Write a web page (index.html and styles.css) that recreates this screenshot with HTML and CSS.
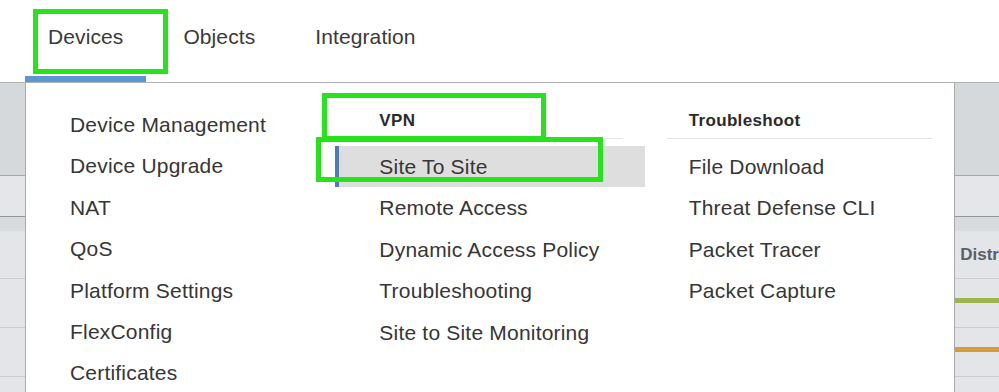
FILE: index.html
```html
<!DOCTYPE html>
<html lang="en">

<head>
    <meta charset="UTF-8">
    <meta name="viewport" content="width=device-width, initial-scale=1.0">
    <title>Devices menu</title>
    <link rel="stylesheet" href="styles.css">
</head>

<body>
    <header class="topnav">
        <nav class="tabs">
            <a class="tab active" href="#">Devices</a>
            <a class="tab" href="#">Objects</a>
            <a class="tab" href="#">Integration</a>
        </nav>

        <div class="dropdown">
            <ul class="menu-col">
                <li class="menu-item">Device Management</li>
                <li class="menu-item">Device Upgrade</li>
                <li class="menu-item">NAT</li>
                <li class="menu-item">QoS</li>
                <li class="menu-item">Platform Settings</li>
                <li class="menu-item">FlexConfig</li>
                <li class="menu-item">Certificates</li>
            </ul>
            <ul class="menu-col">
                <li class="menu-head">VPN</li>
                <li class="menu-item current">Site To Site</li>
                <li class="menu-item">Remote Access</li>
                <li class="menu-item">Dynamic Access Policy</li>
                <li class="menu-item">Troubleshooting</li>
                <li class="menu-item">Site to Site Monitoring</li>
            </ul>
            <ul class="menu-col">
                <li class="menu-head">Troubleshoot</li>
                <li class="menu-item">File Download</li>
                <li class="menu-item">Threat Defense CLI</li>
                <li class="menu-item">Packet Tracer</li>
                <li class="menu-item">Packet Capture</li>
            </ul>
        </div>
    </header>

    <main class="backdrop">
        <div class="band"></div>
        <div class="filter-row"></div>
        <div class="strip"></div>
        <div class="table-head">
            <span></span>
            <span class="col-title">s Distr</span>
        </div>
        <div class="table-row">
            <span></span>
            <span class="bar green"></span>
        </div>
        <div class="table-row">
            <span></span>
            <span class="bar orange"></span>
        </div>
        <div class="table-row"></div>
    </main>

    <!-- annotation boxes from the screenshot -->
    <div class="mark mark-devices"></div>
    <div class="mark mark-vpn"></div>
    <div class="mark mark-site"></div>
</body>

</html>
```

FILE: styles.css
```css
body {
    margin: 0;
    height: 392px;
    overflow: hidden;
    font-family: 'Liberation Sans', Arial, sans-serif;
    color: #363636;
    background-color: #fff;
}

.topnav {
    position: relative;
    height: 82px;
    border-bottom: 1px solid #b3b3b3;
    background-color: #fff;
    z-index: 2;
}

.tabs {
    display: flex;
    gap: 14px;
    height: 100%;
    padding-left: 25px;
}

.tab {
    box-sizing: border-box;
    height: 82px;
    padding: 24px 23px 0;
    font-size: 21px;
    line-height: 26px;
    letter-spacing: 0.1px;
    color: #3a3a3a;
    text-decoration: none;
    border-bottom: 6px solid transparent;
}

.tab.active {
    border-bottom-color: #5b97d1;
}

.dropdown {
    position: absolute;
    top: calc(100% + 1px);
    left: 25px;
    width: 928px;
    height: 320px;
    display: grid;
    grid-template-columns: repeat(3, 1fr);
    background-color: #fff;
    border-left: 1px solid #a9a9a9;
    border-right: 1px solid #a9a9a9;
}

.menu-col {
    list-style: none;
    margin: 0;
    padding: 21px 0 0;
}

.menu-head {
    margin: 0 22px 7px;
    padding-left: 22px;
    height: 34px;
    line-height: 34px;
    font-size: 17px;
    font-weight: bold;
    letter-spacing: 0.35px;
    color: #2b2b2b;
    border-bottom: 1px solid #e3e3e3;
}

.menu-item {
    height: 41.4px;
    line-height: 41.4px;
    padding-left: 44px;
    font-size: 21px;
    letter-spacing: 0.2px;
    white-space: nowrap;
}

.menu-item.current {
    padding-left: 40px;
    border-left: 4px solid #4e7db6;
    background-color: #dedede;
}

.backdrop {
    background-color: #e3e5e8;
}

.band {
    height: 92px;
    background-color: #d6d9dc;
    border-bottom: 1px solid #a3a6a9;
}

.filter-row {
    height: 40px;
    background-color: #e4e6e9;
    border-bottom: 1px solid #94979a;
}

.strip {
    height: 14px;
    background-color: #d8dbde;
}

.table-head,
.table-row {
    display: grid;
    grid-template-columns: 946px 1fr;
    border-bottom: 1px solid #c9cbce;
}

.table-head {
    height: 47px;
    align-items: center;
}

.table-row {
    height: 48px;
    align-items: start;
}

.col-title {
    font-size: 17px;
    font-weight: bold;
    color: #5b6067;
    white-space: nowrap;
    overflow: hidden;
}

.bar {
    height: 5px;
    margin-top: 19px;
}

.green {
    background-color: #9bb54a;
}

.orange {
    background-color: #d69c39;
}

.mark {
    position: absolute;
    z-index: 5;
    box-sizing: border-box;
    border: 5px solid #27e31b;
}

.mark-devices {
    left: 33px;
    top: 9px;
    width: 135px;
    height: 65px;
}

.mark-vpn {
    left: 322px;
    top: 93px;
    width: 224px;
    height: 48px;
}

.mark-site {
    left: 316px;
    top: 137px;
    width: 287px;
    height: 45px;
}
```
